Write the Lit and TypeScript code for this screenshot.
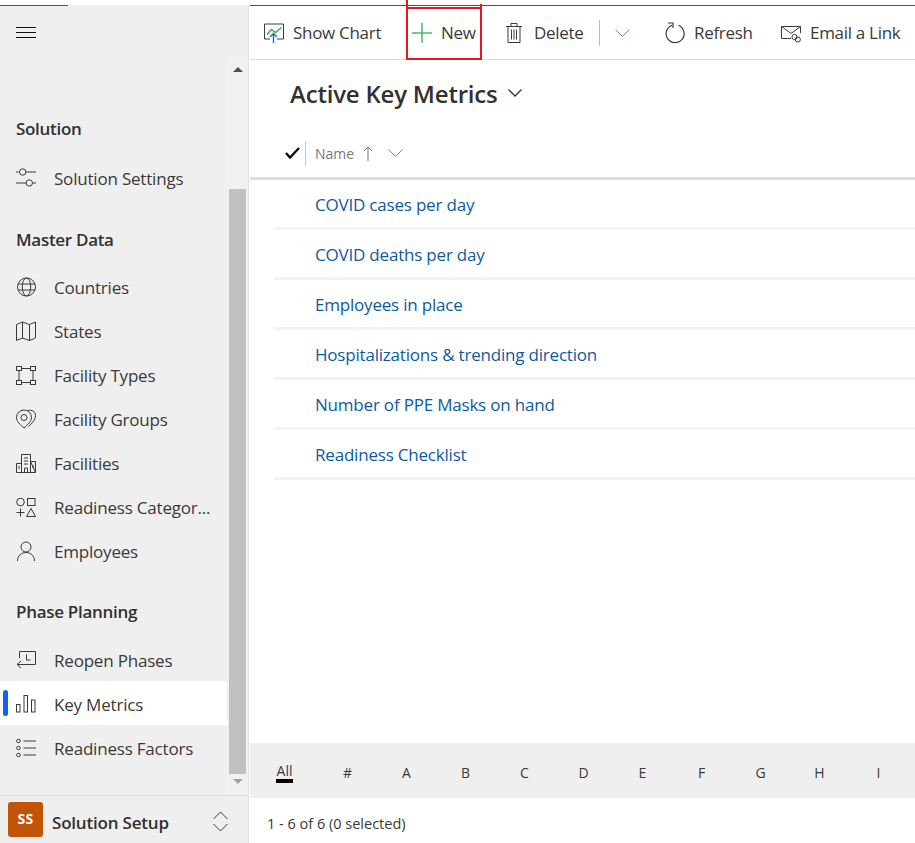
import { LitElement, html, css, svg } from "lit";
import { customElement } from "lit/decorators.js";

const I = {
  settings: svg`<circle cx="6.700" cy="4" r="3.200"/><path d="M0 4h2.500M10 4h10M0 15h10M17 15h3"/><circle cx="13.300" cy="15" r="3.200"/>`,
  globe: svg`<circle cx="10.500" cy="10" r="9"/><ellipse cx="10.500" cy="10" rx="4.200" ry="9"/><path d="M2 7h17M2 13h17"/>`,
  map: svg`<path d="M.5 3.500 6.500 1l7 2.500 6-2.500v16l-6 2.500-7-2.500-6 2.500zM6.500 1v16.500M13.500 3.500V20"/>`,
  types: svg`<rect x=".5" y="1.500" width="5" height="4"/><rect x="14.500" y="1.500" width="5" height="4"/><rect x=".5" y="15.500" width="5" height="4"/><rect x="14.500" y="15.500" width="5" height="4"/><path d="M5.500 3.500h9M5.500 17.500h9M3 5.500v10M17 5.500v10"/>`,
  groups: svg`<path d="M8 19C4 15.500.5 12.500 .5 8.500a7.500 7.500 0 0 1 15 0C15.500 12.500 12 15.500 8 19z"/><circle cx="8" cy="8.500" r="3"/><path d="M11.500 1.500C16 .5 19.500 2.500 19.500 6.500c0 4-3.500 8-7 11"/>`,
  building: svg`<path d="M.5 19.500v-9h5M5.500 19.500V1.500h9v18M14.500 8.500h5v11zM.5 19.500h19M8 5h4M8 8h4M8 11h4M8.500 19.500V15h3v4.500M3 13v3M17 12v3"/>`,
  shapes: svg`<circle cx="4.500" cy="5" r="3.800"/><rect x="11.500" y="1.500" width="7.500" height="7"/><path d="M4.500 11.500v8M.5 15.500h8M15 11.500l4.500 8h-9z"/>`,
  person: svg`<circle cx="10" cy="6" r="5"/><path d="M1.500 20c0-5 3.500-8.500 8.500-8.500s8.500 3.500 8.500 8.500"/>`,
  reopen: svg`<path d="M3.500 8V1.500h16v13H5M5 11l-4 3.500 4 3.500M1 14.500h5M10.500 4.500v5.500h4"/>`,
  bars: svg`<rect x=".5" y="10.500" width="3.500" height="7.500"/><rect x="8" y="1.500" width="3.500" height="16.500"/><rect x="15.500" y="6" width="3.500" height="12"/>`,
  list: svg`<circle cx="2.500" cy="3" r="1.800"/><circle cx="2.500" cy="10" r="1.800"/><circle cx="2.500" cy="17" r="1.800"/><path d="M7.500 3H20M7.500 10H20M7.500 17H20"/>`,
};

const NAV = [
  { title: "Solution", items: [["settings", "Solution Settings"]] },
  { title: "Master Data", items: [["globe", "Countries"], ["map", "States"], ["types", "Facility Types"], ["groups", "Facility Groups"], ["building", "Facilities"], ["shapes", "Readiness Categor..."], ["person", "Employees"]] },
  { title: "Phase Planning", items: [["reopen", "Reopen Phases"], ["bars", "Key Metrics"], ["list", "Readiness Factors"]] },
] as { title: string; items: [keyof typeof I, string][] }[];

const ROWS = ["COVID cases per day", "COVID deaths per day", "Employees in place", "Hospitalizations & trending direction", "Number of PPE Masks on hand", "Readiness Checklist"];
const LETTERS = ["All", "#", "A", "B", "C", "D", "E", "F", "G", "H", "I"];

@customElement("app-root")
export class AppRoot extends LitElement {
  static styles = css`
    :host { display: block; width: 915px; height: 843px; overflow: hidden; background: #fff; font-family: "Open Sans", "Noto Sans", sans-serif; color: #3b3a39; }
    svg { display: block; fill: none; stroke: #3b3a39; stroke-width: 1; flex: none; overflow: visible; }
    .page { display: grid; grid-template-columns: 249px 1fr; height: 843px; padding-top: 5px; box-sizing: border-box; }

    .side { position: relative; display: flex; flex-direction: column; background: #efefef; min-height: 0; box-shadow: inset -1px 0 0 #e2e2e2; }
    .side::before { content: ""; position: absolute; left: 0; top: 0; width: 68px; height: 1px; background: #0f6b7f; }
    .side-top { height: 54px; flex: none; padding: 22px 0 0 16px; box-sizing: border-box; }
    .side-top svg { stroke: #111; }
    .side-mid { flex: 1; min-height: 0; display: flex; }
    .nav { flex: 1; padding-top: 60px; min-width: 0; }
    .sec + .sec { margin-top: 30px; }
    .sec-title { height: 20px; line-height: 20px; padding-left: 16px; font-size: 17px; font-weight: 600; letter-spacing: -.3px; color: #323130; margin-bottom: 15px; }
    .sec:nth-child(1) .sec-title { margin-bottom: 16px; }
    .sec:nth-child(2) { margin-top: 31px; }
    .sec:nth-child(2) .sec-title { margin-bottom: 14px; }
    .row { position: relative; height: 44px; display: flex; align-items: center; gap: 18px; padding-left: 16px; padding-top: 2px; font-size: 17px; letter-spacing: -.2px; box-sizing: border-box; white-space: nowrap; color: #3b3a39; }
    .row.on { background: #fff; }
    .row.on::before { content: ""; position: absolute; left: 3px; top: 9px; width: 5px; height: 26px; border-radius: 3px; background: #0f62fe; }
    .bar { width: 21px; flex: none; margin-right: 1px; background: #f1f1f1; display: flex; flex-direction: column; align-items: center; }
    .arrow { height: 130px; flex: none; padding-top: 8px; box-sizing: border-box; }
    .arrow svg { stroke: none; fill: #505050; }
    .arrow.down { height: 21px; padding-top: 5px; }
    .arrow.down svg { fill: #a3a3a3; }
    .thumb { flex: 1; width: 17px; background: #c1c1c1; }
    .side-foot { height: 48px; flex: none; border-top: 1px solid #dcdcdc; display: flex; align-items: center; padding-left: 8px; box-sizing: border-box; }
    .avatar { width: 35px; height: 35px; border-radius: 3px; background: #c25408; color: #fff; font-size: 14px; font-weight: 700; display: grid; place-items: center; letter-spacing: .3px; padding-bottom: 3px; box-sizing: border-box; }
    .foot-name { margin-left: 9px; flex: 1; padding-top: 6px; font-size: 17px; font-weight: 600; letter-spacing: -.2px; color: #323130; }
    .side-foot svg { margin: 4px 21px 0 0; }

    .main { display: flex; flex-direction: column; min-width: 0; border-top: 1px solid #0f6b7f; margin-left: 1px; }
    .tools { height: 54px; flex: none; box-sizing: border-box; border-bottom: 1px solid #d9d9d9; display: flex; padding-left: 14px; }
    .tool { display: flex; align-items: center; gap: 9px; font-size: 17px; letter-spacing: -.3px; white-space: nowrap; color: #3b3a39; box-sizing: border-box; }
    .t1 { width: 143px; }
    .t2 { width: 99px; padding-left: 5px; position: relative; }
    .t3 { width: 93px; gap: 12px; }
    .t4 { width: 50px; }
    .t5 { width: 116px; }
    .t6 svg { margin-top: 3px; }
    .t2::after { content: ""; position: absolute; left: -1px; top: 1px; width: 76px; height: 53px; border: 2px solid #e3191f; box-sizing: border-box; pointer-events: none; }
    .t2::before { content: ""; position: absolute; left: -1px; top: -6px; width: 76px; height: 7px; background: linear-gradient(#e3191f, #e3191f) left top / 2px 100% no-repeat, linear-gradient(#e3191f, #e3191f) right bottom / 2px 3px no-repeat; }
    .divider { width: 1px; height: 26px; align-self: center; background: #b8b8b8; margin-right: 15px; }
    .head { height: 66px; flex: none; display: flex; align-items: center; gap: 10px; padding-left: 40px; box-sizing: border-box; font-size: 24px; font-weight: 600; letter-spacing: -.2px; color: #323130; }
    .cols { height: 54px; flex: none; box-sizing: border-box; border-bottom: 3px solid #dedede; display: flex; align-items: center; padding: 3px 0 0 35px; font-size: 14px; color: #7a7875; }
    .check { margin-right: 5px; }
    .cols .sep { width: 1px; height: 25px; background: #c8c8c8; margin-right: 9px; }
    .cols .name { margin-right: 9px; }
    .cols .chev { margin-left: 15px; }
    .rows { flex: 1; padding-left: 24px; min-height: 0; }
    .item { height: 50px; box-sizing: border-box; border-bottom: 3px solid #f3f3f3; display: flex; align-items: center; padding: 2px 0 0 41px; font-size: 17px; letter-spacing: -.2px; color: #0e5a9f; }
    .alpha { height: 55px; flex: none; background: #efefef; display: flex; align-items: center; padding: 4px 0 0 5px; font-size: 14px; color: #3b3a39; box-sizing: border-box; }
    .alpha span { position: relative; width: 59px; text-align: center; }
    .alpha span.all { margin: -4px 4px 0 0; }
    .alpha span.all::after { content: ""; position: absolute; left: 21px; bottom: -3px; width: 17px; height: 4px; background: #000; }
    .status { height: 46px; flex: none; display: flex; align-items: center; padding: 4px 0 0 17px; box-sizing: border-box; font-size: 14.500px; color: #3b3a39; margin-bottom: -1px; }
  `;

  render() {
    return html`<div class="page">
      <aside class="side">
        <div class="side-top">
          <svg width="20" height="12" viewBox="0 0 20 12"><path d="M0 .5h20M0 5.500h20M0 10.500h20"/></svg>
        </div>
        <div class="side-mid">
          <nav class="nav">
            ${NAV.map((s) => html`<section class="sec">
              <div class="sec-title">${s.title}</div>
              ${s.items.map(([ic, label]) => html`<div class="row ${label === "Key Metrics" ? "on" : ""}">
                <svg width="20" height="20" viewBox="0 0 20 20">${I[ic]}</svg><span>${label}</span>
              </div>`)}
            </section>`)}
          </nav>
          <div class="bar">
            <div class="arrow"><svg width="10" height="5" viewBox="0 0 10 5"><path d="M0 5 5 0l5 5z"/></svg></div>
            <div class="thumb"></div>
            <div class="arrow down"><svg width="10" height="5" viewBox="0 0 10 5"><path d="M0 0h10L5 5z"/></svg></div>
          </div>
        </div>
        <div class="side-foot">
          <div class="avatar">SS</div>
          <div class="foot-name">Solution Setup</div>
          <svg width="15" height="21" viewBox="0 0 15 21"><path d="M.5 8 7.500 1l7 7M.5 13l7 7 7-7"/></svg>
        </div>
      </aside>
      <main class="main">
        <div class="tools">
          <div class="tool t1">
            <svg width="20" height="20" viewBox="0 0 20 20">
              <path d="M6 16H.5V1h19v15H13"/>
              <path d="M3 11.500 7.500 6.500l4 3 6-5" stroke="#3aa35c" stroke-width="1.400"/>
              <path d="M9.500 20V10.500M6 14l3.500-3.500L13 14" stroke="#1d6fb8" stroke-width="1.400"/>
            </svg>Show Chart
          </div>
          <div class="tool t2">
            <svg width="20" height="20" viewBox="0 0 20 20"><path d="M10 0v20M0 10h20" stroke="#4cb872" stroke-width="1.500"/></svg>New
          </div>
          <div class="tool t3">
            <svg width="16" height="20" viewBox="0 0 16 20"><path d="M0 3.500h16M5 3.500V.5h6v3M2 3.500v16h12v-16M5.500 6.500v10M8 6.500v10M10.500 6.500v10"/></svg>Delete
          </div>
          <div class="divider"></div>
          <div class="tool t4">
            <svg width="15" height="8" viewBox="0 0 15 8"><path d="M.5.5l7 7 7-7" stroke="#7b8fa8"/></svg>
          </div>
          <div class="tool t5">
            <svg width="20" height="22" viewBox="0 0 20 22"><path d="M7 3.200A9 9 0 1 0 13.500 3.300M3 1h5v5" stroke-width="1.200"/></svg>Refresh
          </div>
          <div class="tool t6">
            <svg width="20" height="18" viewBox="0 0 20 18"><path d="M10 13.500H.5V1.500h19V8M.5 1.500 10 8.500l9.500-7"/><circle cx="13.500" cy="12" r="2.600"/><circle cx="16.800" cy="14.500" r="2.600"/></svg>Email a Link
          </div>
        </div>
        <div class="head">Active Key Metrics
          <svg width="14" height="8" viewBox="0 0 14 8"><path d="M.5.5l6.500 6.500 6.500-6.500" stroke="#323130" stroke-width="1.300"/></svg>
        </div>
        <div class="cols">
          <svg class="check" width="15" height="12" viewBox="0 0 15 12"><path d="M1 6l4 4.500L14 1" stroke="#000" stroke-width="2.200"/></svg>
          <div class="sep"></div>
          <span class="name">Name</span>
          <svg width="10" height="15" viewBox="0 0 10 15"><path d="M5 15V1M1 5l4-4 4 4" stroke="#7a7875"/></svg>
          <svg class="chev" width="15" height="8" viewBox="0 0 15 8"><path d="M.5.5l7 7 7-7" stroke="#8a8886"/></svg>
        </div>
        <div class="rows">${ROWS.map((r) => html`<div class="item">${r}</div>`)}</div>
        <div class="alpha">${LETTERS.map((l) => html`<span class=${l === "All" ? "all" : ""}>${l}</span>`)}</div>
        <div class="status">1 - 6 of 6 (0 selected)</div>
      </main>
    </div>`;
  }
}
